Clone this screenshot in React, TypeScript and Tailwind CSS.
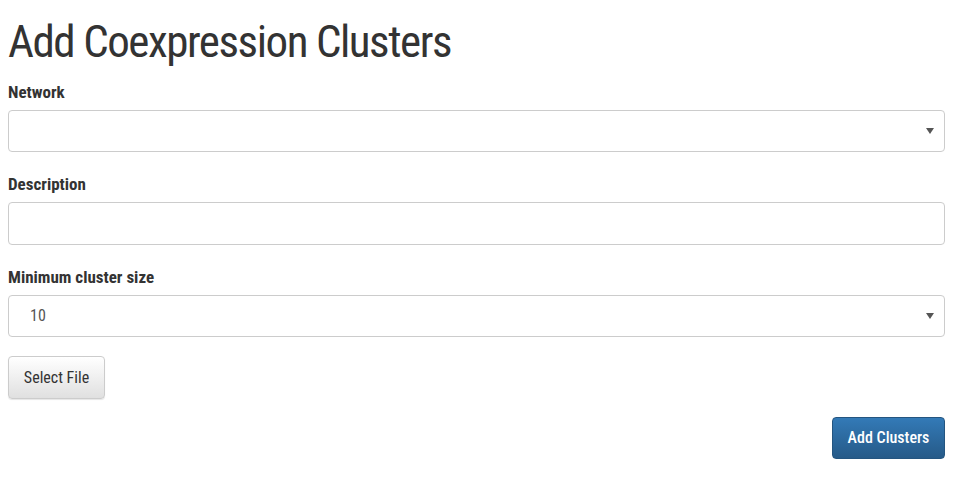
import React from "react";

function Caret() {
  return (
    <svg width="8" height="6" viewBox="0 0 8 6" className="absolute right-[10px] top-1/2 -translate-y-1/2">
      <path d="M0 0 L8 0 L4 6 Z" fill="#555" />
    </svg>
  );
}

export default function App() {
  const font = { fontFamily: "Roboto, 'Liberation Sans', sans-serif", fontStretch: "75%" } as React.CSSProperties;
  return (
    <div className="bg-white w-[964px] h-[483px] pl-[8px] pr-[19px] pt-[17px] text-[#333]" style={font}>
      <h1 className="text-[45px] leading-[50px] font-normal tracking-[-1.45px] text-[#333] m-0">Add Coexpression Clusters</h1>
      <div className="mt-[15px]">
        <label className="block text-[17px] font-bold leading-[20px]">Network</label>
        <div className="relative mt-[8px] h-[42px] border border-[#ccc] rounded-[4px] bg-white">
          <Caret />
        </div>
      </div>
      <div className="mt-[22px]">
        <label className="block text-[17px] font-bold leading-[20px]">Description</label>
        <div className="relative mt-[8px] h-[43px] border border-[#ccc] rounded-[4px] bg-white" />
      </div>
      <div className="mt-[22px]">
        <label className="block text-[17px] font-bold leading-[20px]">Minimum cluster size</label>
        <div className="relative mt-[8px] h-[42px] border border-[#ccc] rounded-[4px] bg-white flex items-center pl-[21px] text-[16px] text-[#555]">
          10
          <Caret />
        </div>
      </div>
      <div className="mt-[19px]">
        <button className="block h-[43px] w-[97px] border border-[#ccc] rounded-[4px] text-[16px] text-[#333] bg-gradient-to-b from-white to-[#e0e0e0] shadow-[0_1px_1px_rgba(0,0,0,0.1)]">
          Select File
        </button>
      </div>
      <div className="flex justify-end mt-[18px]">
        <button className="block h-[42px] w-[113px] border border-[#245580] rounded-[4px] text-[16px] font-medium text-white bg-gradient-to-b from-[#337ab7] to-[#265a88]">
          Add Clusters
        </button>
      </div>
    </div>
  );
}
